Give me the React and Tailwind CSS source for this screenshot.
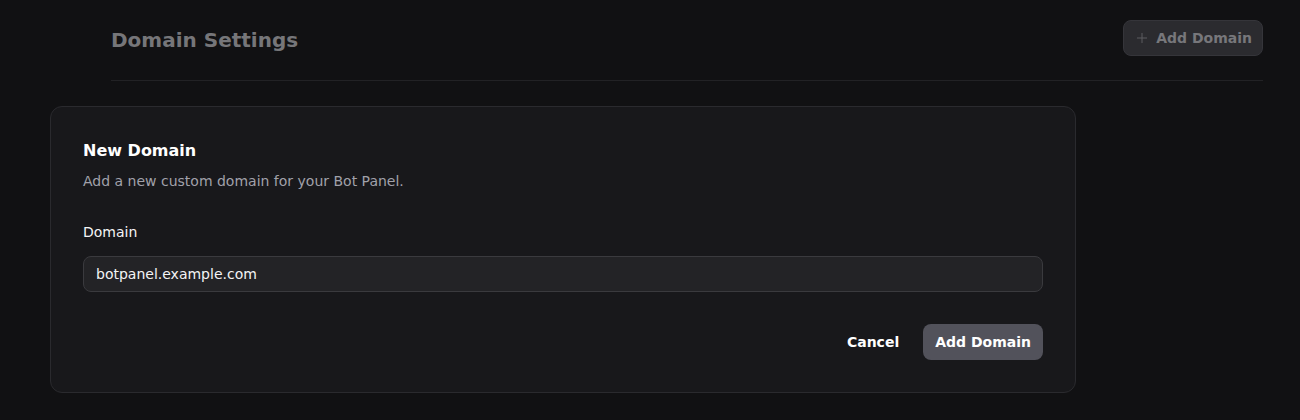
import React, { useState } from 'react';
import { Plus } from 'lucide-react';

export default function App() {
  const [domain, setDomain] = useState('botpanel.example.com');

  return (
    <div className="min-h-screen bg-[#111113] font-['DejaVu_Sans',sans-serif] text-white">
      {/* Page header (dimmed behind the dialog) */}
      <div className="ml-[111px] mr-[37px] flex items-center justify-between border-b border-[#222225] pt-5 pb-6">
        <h1 className="pt-1 text-xl font-bold text-[#767679]">Domain Settings</h1>
        <button className="flex h-9 items-center gap-1.5 rounded-lg border border-[#35353a] bg-[#2b2b2f] px-2.5 text-sm font-bold text-[#77777b]">
          <Plus className="h-4 w-4 text-[#5c5c60]" strokeWidth={1.5} />
          Add Domain
        </button>
      </div>

      {/* New domain card */}
      <div className="ml-[50px] mt-[25px] w-[1026px] rounded-xl border border-[#2a2a2e] bg-[#18181b] p-8">
        <h2 className="text-base leading-6 font-bold text-white">New Domain</h2>
        <p className="mt-2 text-sm leading-5 text-[#a1a1aa]">Add a new custom domain for your Bot Panel.</p>

        <label className="mt-[31px] block text-sm leading-5 text-[#f4f4f5]">Domain</label>
        <input
          value={domain}
          onChange={(e) => setDomain(e.target.value)}
          className="mt-[14px] block h-9 w-full rounded-lg border border-[#3a3a3e] bg-[#232326] px-3 text-sm text-[#f4f4f5] outline-none"
        />

        <div className="mt-8 flex justify-end gap-3">
          <button className="h-9 rounded-lg px-3 text-sm font-bold text-white">Cancel</button>
          <button className="h-9 rounded-lg bg-[#52525b] px-3 text-sm font-bold text-white">
            Add Domain
          </button>
        </div>
      </div>
    </div>
  );
}
